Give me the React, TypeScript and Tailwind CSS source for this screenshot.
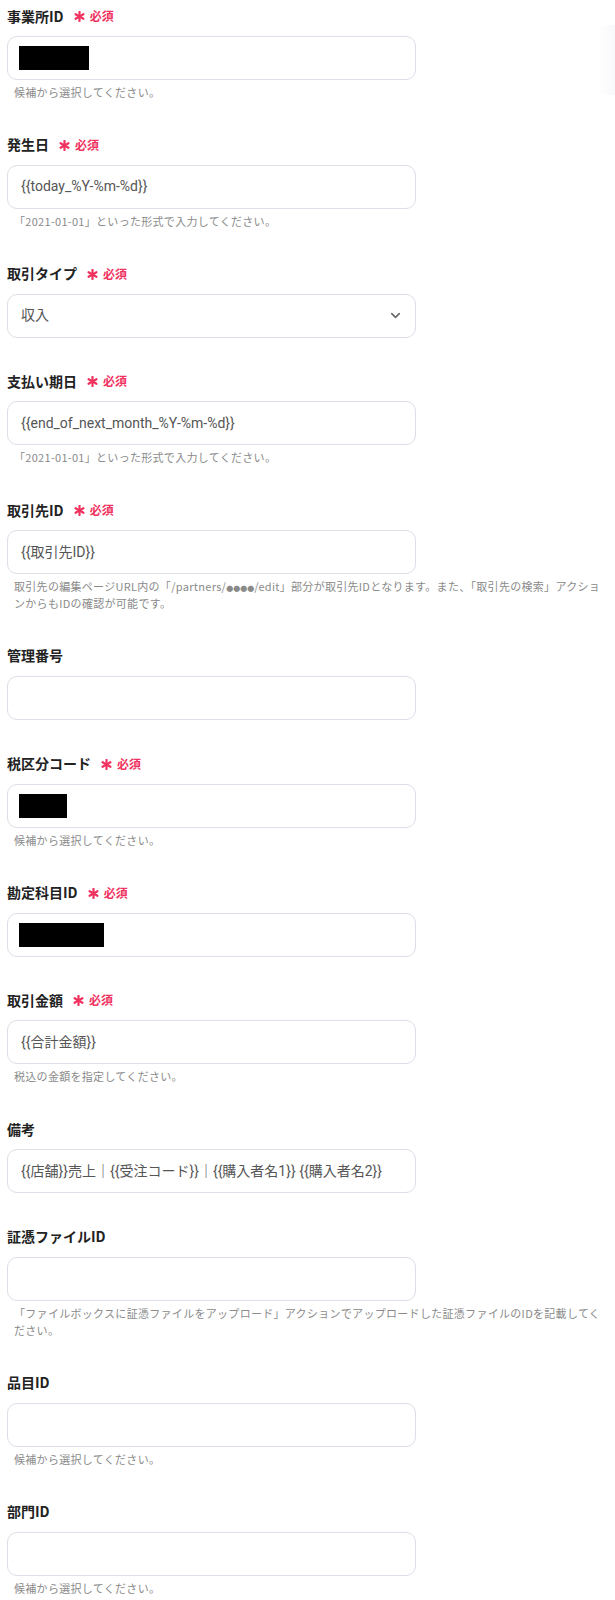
import { ChevronDown } from 'lucide-react';
import type { ReactNode } from 'react';

type Field = {
	label: string;
	required?: boolean;
	value?: string;
	masked?: number;
	select?: boolean;
	hint?: ReactNode;
};

const FIELDS: Field[] = [
	{ label: '事業所ID', required: true, masked: 70, hint: '候補から選択してください。' },
	{
		label: '発生日',
		required: true,
		value: '{{today_%Y-%m-%d}}',
		hint: '「2021-01-01」といった形式で入力してください。',
	},
	{ label: '取引タイプ', required: true, value: '収入', select: true },
	{
		label: '支払い期日',
		required: true,
		value: '{{end_of_next_month_%Y-%m-%d}}',
		hint: '「2021-01-01」といった形式で入力してください。',
	},
	{
		label: '取引先ID',
		required: true,
		value: '{{取引先ID}}',
		hint: (
			<>
				取引先の編集ページURL内の「/partners/
				<span className="text-[7px] leading-none tracking-[0px]">●●●●</span>
				/edit」部分が取引先IDとなります。また、「取引先の検索」アクションからもIDの確認が可能です。
			</>
		),
	},
	{ label: '管理番号' },
	{ label: '税区分コード', required: true, masked: 48, hint: '候補から選択してください。' },
	{ label: '勘定科目ID', required: true, masked: 85 },
	{
		label: '取引金額',
		required: true,
		value: '{{合計金額}}',
		hint: '税込の金額を指定してください。',
	},
	{ label: '備考', value: '{{店舗}}売上｜{{受注コード}}｜{{購入者名1}} {{購入者名2}}' },
	{
		label: '証憑ファイルID',
		hint: '「ファイルボックスに証憑ファイルをアップロード」アクションでアップロードした証憑ファイルのIDを記載してください。',
	},
	{ label: '品目ID', hint: '候補から選択してください。' },
	{ label: '部門ID', hint: '候補から選択してください。' },
];

function Asterisk() {
	return (
		<svg width="11" height="11" viewBox="0 0 12 12" className="mt-[1px]">
			<g stroke="#f0325f" strokeWidth="2.4" strokeLinecap="round">
				<line x1="6" y1="1" x2="6" y2="11" />
				<line x1="1.7" y1="3.5" x2="10.3" y2="8.5" />
				<line x1="1.7" y1="8.5" x2="10.3" y2="3.5" />
			</g>
		</svg>
	);
}

function FormField({ label, required, value, masked, select, hint }: Field) {
	return (
		<div className="mb-[33.8px]">
			<div className="flex items-center h-5">
				<span className="text-[14px] font-bold text-[#222]">{label}</span>
				{required && (
					<span className="flex items-center ml-[10px] gap-[5px] text-[#f0325f] font-bold">
						<Asterisk />
						<span className="text-[12px]">必須</span>
					</span>
				)}
			</div>
			<div className="mt-[10px] w-[409px] h-[44px] rounded-[10px] border border-[#dedde8] bg-white flex items-center pl-[11px] pr-[12px]">
				{masked ? (
					<div className="h-[24px] bg-black" style={{ width: masked }} />
				) : (
					<span
						className="flex-1 pl-[2px] text-[14px] text-[#555] whitespace-nowrap"
						style={{ fontFamily: "Roboto, 'Noto Sans CJK JP', sans-serif" }}
					>
						{value}
					</span>
				)}
				{select && <ChevronDown className="w-[15px] h-[15px] text-[#666]" strokeWidth={2.5} />}
			</div>
			{hint && (
				<p className="mt-1 pl-[7px] pr-[7px] text-[11px] leading-[17px] tracking-[0.3px] text-[#8a8a8a]">
					{hint}
				</p>
			)}
		</div>
	);
}

export default function App() {
	return (
		<div
			className="relative w-[615px] min-h-[1600px] bg-white pt-[6px] pl-[7px] overflow-hidden"
			style={{ fontFamily: "'Noto Sans CJK JP', 'Noto Sans', sans-serif" }}
		>
			<div className="absolute right-0 top-[25px] w-[16px] h-[70px] bg-gradient-to-l from-[#f8f7fa] to-transparent" />
			{FIELDS.map((f) => (
				<FormField key={f.label} {...f} />
			))}
		</div>
	);
}
